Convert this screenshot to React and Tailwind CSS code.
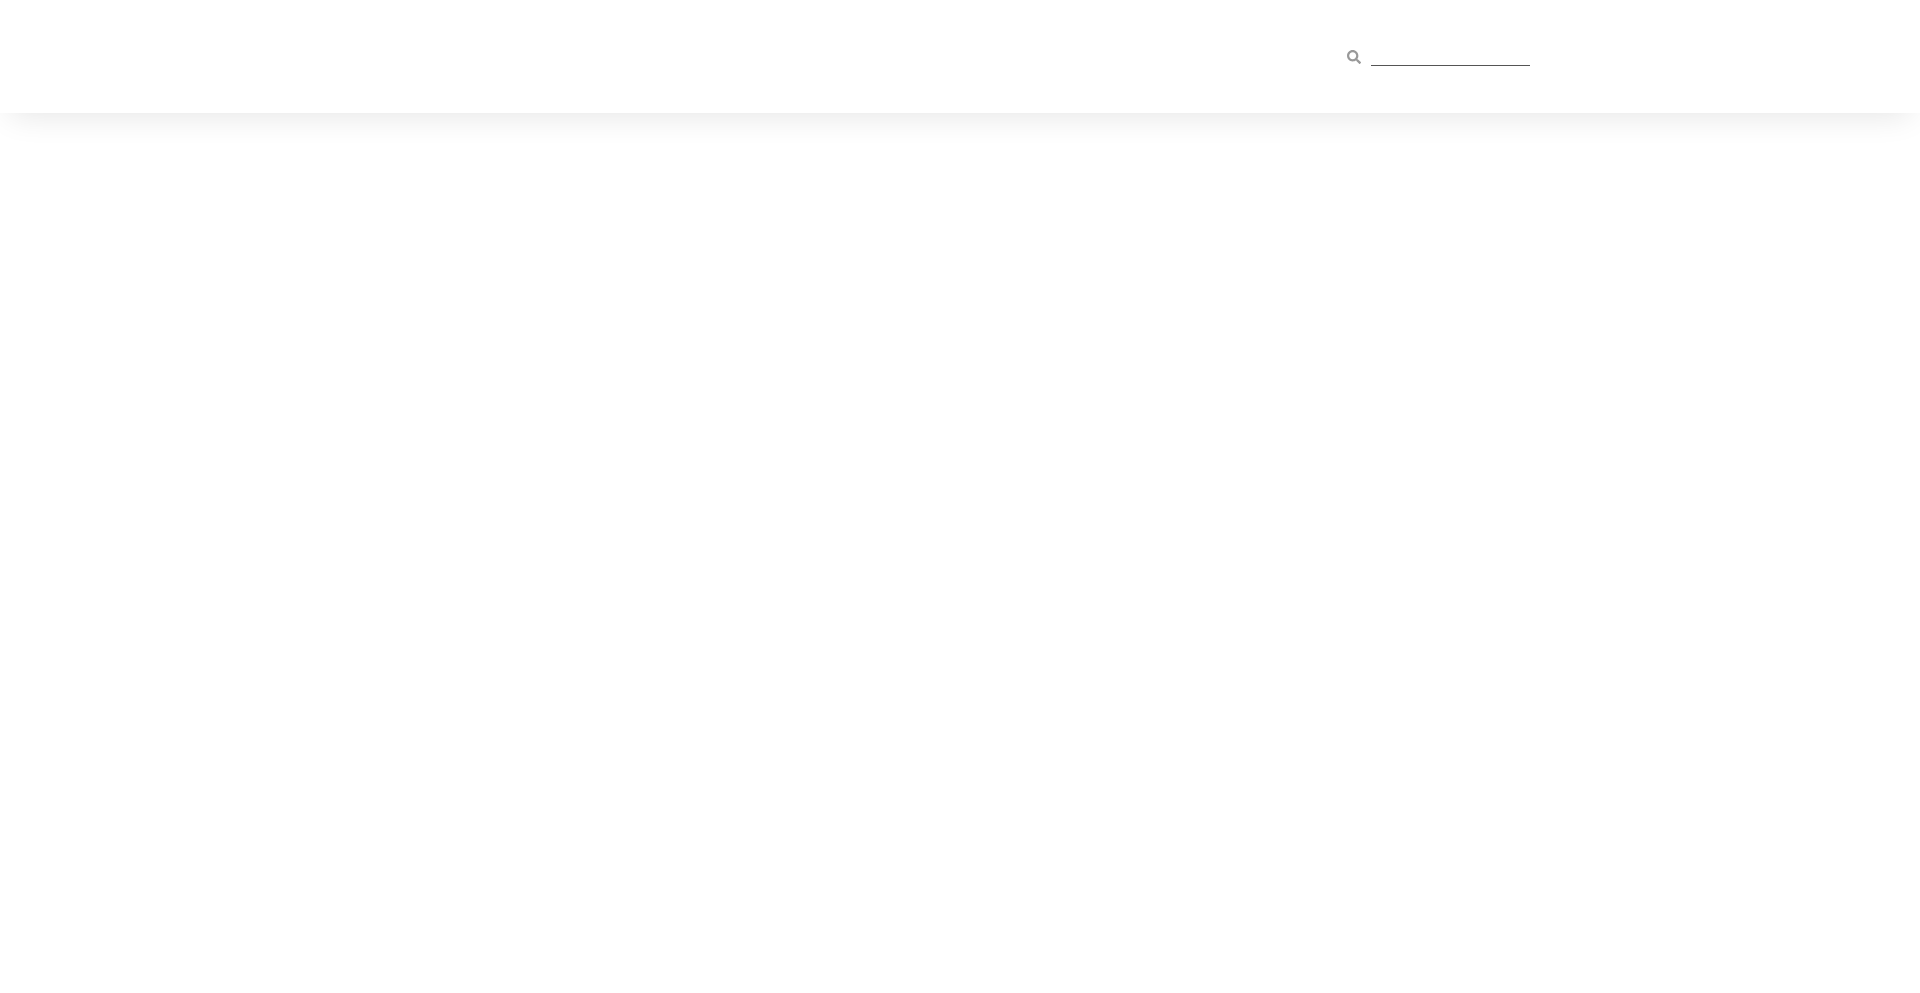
import { FaSearch } from "react-icons/fa";

export default function App() {
  return (
    <div className="min-h-screen bg-white">
      {/* Top bar */}
      <header className="h-[113px] bg-white shadow-[0_12px_30px_-10px_rgba(0,0,0,0.11)]">
        <div className="mx-auto flex h-full max-w-[1140px] items-center justify-end">
          <form role="search" className="flex items-center gap-2.5">
            <label htmlFor="search">
              <FaSearch className="h-3.5 w-3.5 text-[#999]" aria-label="Search" />
            </label>
            <input
              id="search"
              type="search"
              className="h-[19px] w-[159px] border-b border-[#555] bg-transparent text-sm outline-none"
            />
          </form>
        </div>
      </header>
    </div>
  );
}
